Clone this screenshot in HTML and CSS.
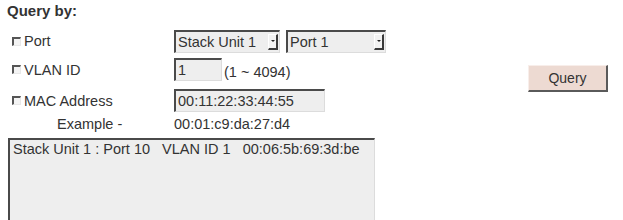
FILE: index.html
```html
<!DOCTYPE html>
<html>
<head>
<meta charset="utf-8">
<link rel="stylesheet" href="styles.css">
</head>
<body>
<div class="page">
  <div class="title">Query by:</div>
  <div class="main">
    <div class="form">
      <div class="row row-port">
        <label class="lbl"><span class="cb"></span>Port</label>
        <div class="ctl">
          <div class="sel sel-unit"><span class="val">Stack Unit 1</span><span class="arrow"></span></div>
          <div class="sel sel-port"><span class="val">Port 1</span><span class="arrow"></span></div>
        </div>
      </div>
      <div class="row row-vlan">
        <label class="lbl"><span class="cb"></span>VLAN ID</label>
        <div class="ctl">
          <div class="field field-vlan">1</div>
          <span class="hint">(1 ~ 4094)</span>
        </div>
      </div>
      <div class="row row-mac">
        <label class="lbl"><span class="cb"></span>MAC Address</label>
        <div class="ctl">
          <div class="field field-mac">00:11:22:33:44:55</div>
        </div>
      </div>
      <div class="row row-example">
        <div class="lbl lbl-example">Example -</div>
        <div class="ctl">00:01:c9:da:27:d4</div>
      </div>
      <div class="list">
        <div class="item">Stack Unit 1 : Port 10&nbsp;&nbsp; VLAN ID 1&nbsp;&nbsp; 00:06:5b:69:3d:be</div>
      </div>
    </div>
    <div class="side">
      <button class="btn">Query</button>
    </div>
  </div>
</div>
</body>
</html>
```

FILE: styles.css
```css
html, body {
  margin: 0;
  padding: 0;
  background: #ffffff;
}
body {
  font-family: "Liberation Sans", Arial, sans-serif;
  font-size: 14.5px;
  color: #333333;
  overflow: hidden;
  height: 220px;
}
.page {
  padding: 3px 0 0 7px;
}
.title {
  font-weight: bold;
  font-size: 15px;
  line-height: 16px;
  height: 16px;
}
.main {
  display: flex;
  margin-top: 10px;
}
.form {
  width: 380px;
  display: flex;
  flex-direction: column;
}
.row {
  display: flex;
  align-items: center;
}
.row-port { height: 24px; }
.row-vlan { height: 23px; margin-top: 5px; }
.row-mac { height: 23px; margin-top: 8px; }
.row-example { height: 24px; }
.lbl {
  width: 167px;
  display: flex;
  align-items: center;
  padding-left: 5px;
  box-sizing: border-box;
  white-space: nowrap;
}
.lbl-example {
  padding-left: 50px;
}
.cb {
  width: 9px;
  height: 9px;
  box-sizing: border-box;
  border-top: 2px solid #555555;
  border-left: 2px solid #555555;
  border-right: 1px solid #e8e8e8;
  border-bottom: 1px solid #e8e8e8;
  background: #f4f4f4;
  margin-right: 3px;
}
.ctl {
  display: flex;
  align-items: center;
  white-space: nowrap;
}
.sel, .field {
  height: 23px;
  box-sizing: border-box;
  background: #eeeeee;
  border-top: 2px solid #4a4a4a;
  border-left: 2px solid #4a4a4a;
  border-right: 1px solid #dcdcdc;
  border-bottom: 1px solid #dcdcdc;
  display: flex;
  align-items: center;
  padding-left: 2px;
}
.sel {
  justify-content: space-between;
  padding-right: 1px;
}
.sel-unit { width: 106px; }
.sel-port { width: 100px; margin-left: 6px; }
.arrow {
  width: 10px;
  height: 16px;
  box-sizing: border-box;
  background: #f2f2f2;
  border-right: 2px solid #3a3a3a;
  border-bottom: 2px solid #3a3a3a;
  border-top: 1px solid #ffffff;
  border-left: 1px solid #ffffff;
  display: flex;
  align-items: center;
  justify-content: center;
}
.arrow::after {
  content: "";
  width: 0;
  height: 0;
  border-left: 2px solid transparent;
  border-right: 2px solid transparent;
  border-top: 2px solid #222222;
}
.field-vlan { width: 48px; }
.field-mac { width: 151px; }
.hint { margin-left: 2px; padding-top: 4px; }
.list {
  margin-top: 2px;
  margin-left: 1px;
  width: 367px;
  height: 100px;
  box-sizing: border-box;
  background: #eeeeee;
  border-top: 2px solid #4a4a4a;
  border-left: 2px solid #4a4a4a;
  border-right: 1px solid #dcdcdc;
  padding: 1px 3px;
}
.item {
  line-height: 17px;
  white-space: nowrap;
}
.side {
  padding-left: 141px;
  padding-top: 36px;
}
.btn {
  width: 80px;
  height: 27px;
  background: #eddad2;
  font-family: "Liberation Sans", Arial, sans-serif;
  font-size: 14px;
  color: #333333;
  border-top: 1px solid #f8eeea;
  border-left: 1px solid #f8eeea;
  border-right: 2px solid #5a5a5a;
  border-bottom: 2px solid #5a5a5a;
  padding: 0;
}
```
